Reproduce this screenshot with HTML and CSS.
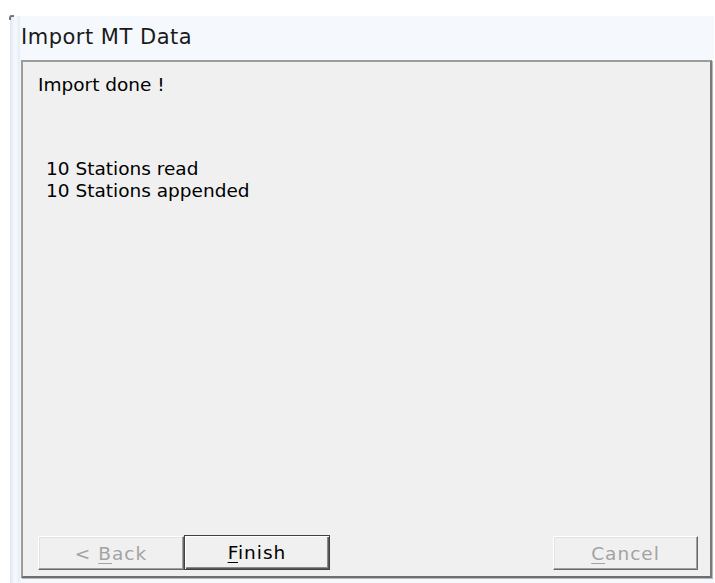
FILE: index.html
```html
<!DOCTYPE html>
<html lang="en">
<head>
<meta charset="utf-8">
<title>Import MT Data</title>
<link rel="stylesheet" href="styles.css">
</head>
<body>
<div class="window">
  <div class="title">Import MT Data</div>
  <div class="panel">
    <div class="status">Import done !</div>
    <div class="summary">
      <div class="line">10 Stations read</div>
      <div class="line">10 Stations appended</div>
    </div>
    <div class="buttons">
      <div class="btn disabled"><span class="label">&lt; <u>B</u>ack</span></div>
      <div class="btn default"><span class="label"><u>F</u>inish</span></div>
      <div class="spacer"></div>
      <div class="btn disabled cancel"><span class="label"><u>C</u>ancel</span></div>
    </div>
  </div>
</div>
</body>
</html>
```

FILE: styles.css
```css
html, body {
  margin: 0;
  padding: 0;
  background: #ffffff;
  width: 715px;
  height: 583px;
  overflow: hidden;
}

body {
  font-family: "DejaVu Sans", sans-serif;
  color: #000;
}

/* outer window frame */
.window {
  position: relative;
  margin: 16px 0 0 10px;
  width: 704px;
  height: 567px;
  box-sizing: border-box;
  padding: 0 2px 0 11px;
  display: flex;
  flex-direction: column;
  background:
    linear-gradient(to right, #dbe6f2 0, #eef4fa 3px, #f7fafd 6px, #e4edf6 9px, #f5f9fd 11px, #f5f9fd 100%);
}

/* rounded dark corner of the frame */
.window::before {
  content: "";
  position: absolute;
  left: -1px;
  top: -1px;
  width: 3px;
  height: 3px;
  border-top: 2px solid #777;
  border-left: 2px solid #777;
  border-top-left-radius: 3px;
}

.title {
  height: 44px;
  box-sizing: border-box;
  padding-top: 8px;
  font-size: 21px;
  line-height: 26px;
  letter-spacing: 0.5px;
  color: #1a1a1a;
}

/* sunken client panel */
.panel {
  flex: 1;
  margin-bottom: 5px;
  background: #f0f0f0;
  border-style: solid;
  border-width: 2px;
  border-color: #9c9c9c #7a7a7a #6e6e6e #9c9c9c;
  box-shadow: 1px 1px 0 #b9b9b9;
  display: flex;
  flex-direction: column;
  padding: 12px 12px 6px 15px;
}

.status {
  font-size: 18.5px;
  line-height: 22px;
}

.summary {
  margin-top: 62px;
  margin-left: 8px;
  font-size: 18.5px;
  line-height: 22px;
}

.buttons {
  margin-top: auto;
  display: flex;
  align-items: flex-end;
}

.spacer {
  flex: 1;
}

.btn {
  width: 146px;
  height: 35px;
  box-sizing: border-box;
  display: flex;
  align-items: center;
  justify-content: center;
  font-size: 18.5px;
  letter-spacing: 1px;
  background: #f0f0f0;
  border: 1px solid;
  border-color: #ffffff #696969 #696969 #ffffff;
  box-shadow: inset -1px -1px 0 #a0a0a0, inset 1px 1px 0 #e3e3e3;
}

.label {
  white-space: pre;
}

.btn u {
  text-underline-offset: 3px;
}

.btn.disabled {
  color: #a3a3a3;
  height: 34px;
}

.btn.default {
  border: 1px solid #404040;
  box-shadow:
    inset 1px 1px 0 #ffffff,
    inset -1px -1px 0 #5a5a5a,
    inset -2px -2px 0 #8a8a8a;
}

.btn.cancel {
  width: 145px;
}
```
